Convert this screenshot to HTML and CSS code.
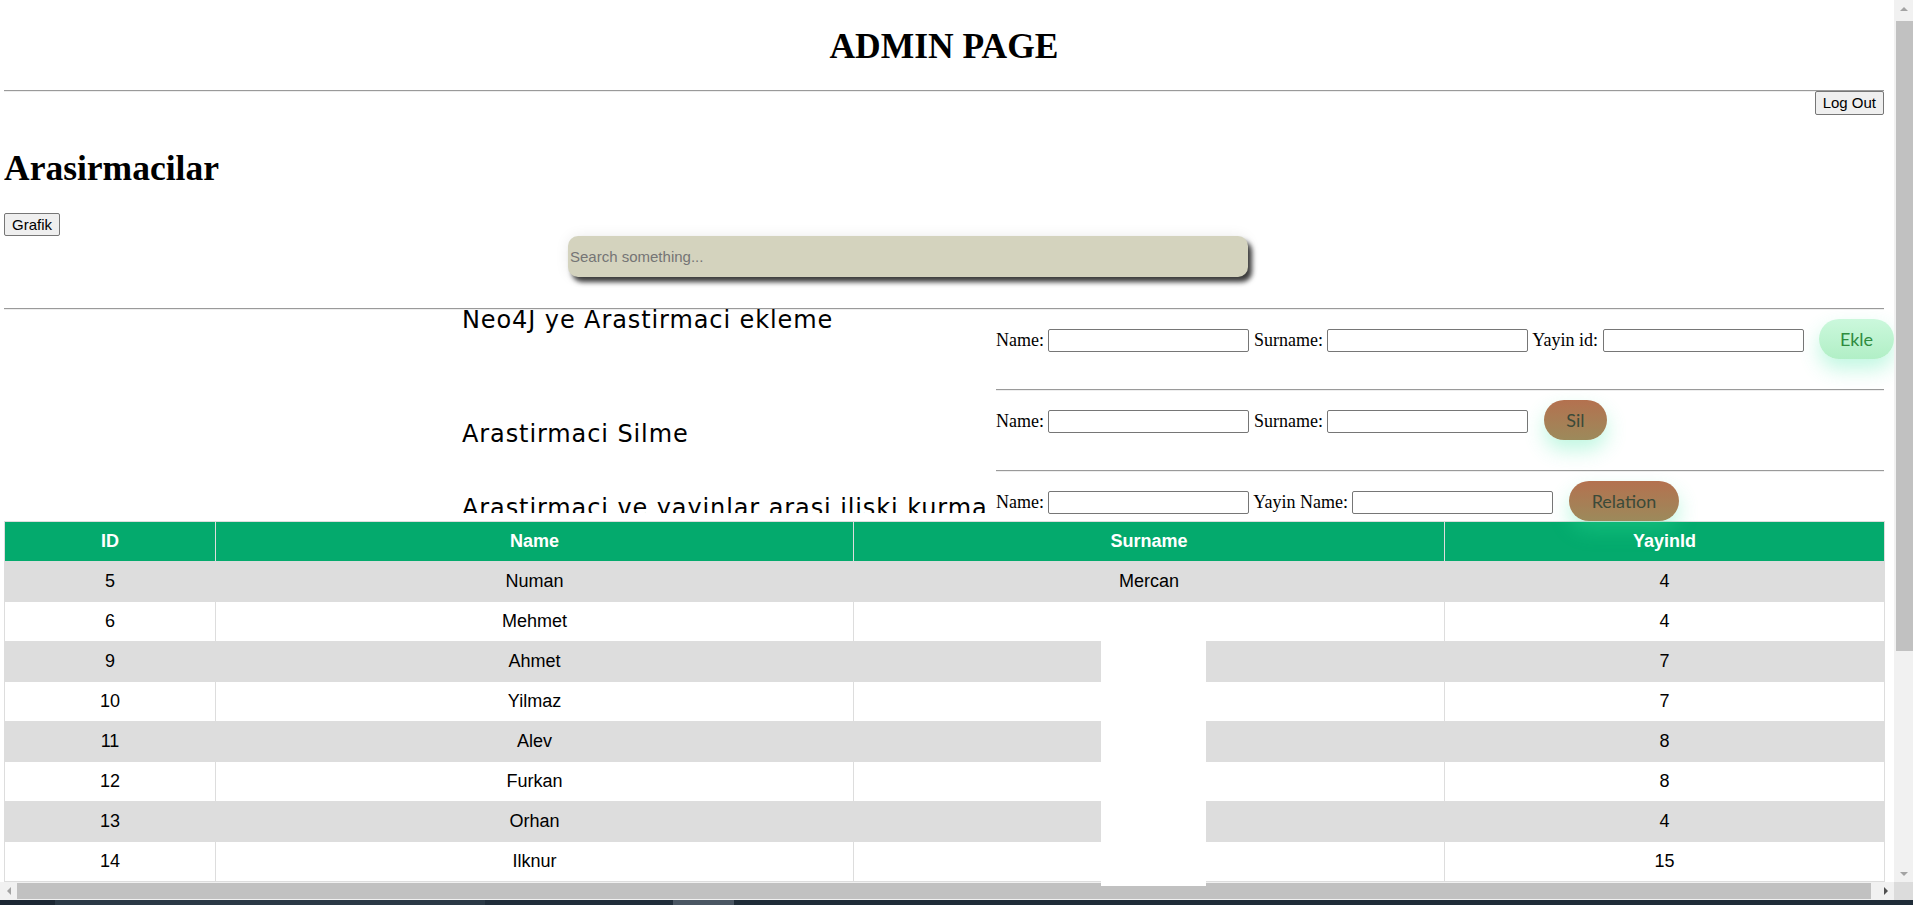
FILE: index.html
```html
<!DOCTYPE html>
<html lang="tr">
<head>
<meta charset="utf-8">
<title>Admin Page</title>
<link rel="stylesheet" href="styles.css">
</head>
<body>
<div class="window">
  <div class="main">
    <div class="viewport">
      <div class="page">
        <h1 class="page-title">ADMIN PAGE</h1>
        <hr class="rule rule-top">
        <div class="toolbar"><button class="sys-btn">Log Out</button></div>
        <h2 class="section-title">Arasirmacilar</h2>
        <div class="grafik-row"><button class="sys-btn">Grafik</button></div>
        <input class="search" type="text" placeholder="Search something...">
        <hr class="rule rule-mid">
        <div class="panel">
          <div class="panel-left">
            <h3 class="topic">Neo4J ye Arastirmaci ekleme</h3>
            <h3 class="topic topic-del">Arastirmaci Silme</h3>
            <h3 class="topic topic-rel">Arastirmaci ve yayinlar arasi iliski kurma</h3>
          </div>
          <div class="panel-right">
            <form class="form-row">Name: <input class="field" type="text"> Surname: <input class="field" type="text"> Yayin id: <input class="field" type="text"> <button type="button" class="act act-add">Ekle</button></form>
            <hr class="rule form-sep">
            <form class="form-row">Name: <input class="field" type="text"> Surname: <input class="field" type="text"> <button type="button" class="act act-del">Sil</button></form>
            <hr class="rule form-sep">
            <form class="form-row">Name: <input class="field" type="text"> Yayin Name: <input class="field" type="text"> <button type="button" class="act act-del act-rel">Relation</button></form>
          </div>
        </div>
        <table class="grid">
          <colgroup>
            <col class="c-id"><col class="c-name"><col class="c-surname"><col class="c-yayin">
          </colgroup>
          <thead>
            <tr><th>ID</th><th>Name</th><th>Surname</th><th>YayinId</th></tr>
          </thead>
          <tbody>
            <tr><td>5</td><td>Numan</td><td>Mercan</td><td>4</td></tr>
            <tr><td>6</td><td>Mehmet</td><td></td><td>4</td></tr>
            <tr><td>9</td><td>Ahmet</td><td></td><td>7</td></tr>
            <tr><td>10</td><td>Yilmaz</td><td></td><td>7</td></tr>
            <tr><td>11</td><td>Alev</td><td></td><td>8</td></tr>
            <tr><td>12</td><td>Furkan</td><td></td><td>8</td></tr>
            <tr><td>13</td><td>Orhan</td><td></td><td>4</td></tr>
            <tr><td>14</td><td>Ilknur</td><td></td><td>15</td></tr>
          </tbody>
        </table>
      </div>
    </div>
    <div class="vscroll">
      <div class="sb-btn"><span class="tri tri-up"></span></div>
      <div class="vs-track"><div class="vs-thumb"></div></div>
      <div class="sb-btn"><span class="tri tri-down"></span></div>
    </div>
  </div>
  <div class="hbar">
    <div class="hscroll">
      <div class="sb-btn sb-btn-h"><span class="tri tri-left"></span></div>
      <div class="hs-track"><div class="hs-thumb"></div></div>
      <div class="sb-btn sb-btn-h"><span class="tri tri-right"></span></div>
    </div>
    <div class="corner"></div>
  </div>
  <div class="taskbar">
    <span class="tb-seg tb-a"></span><span class="tb-seg tb-b"></span><span class="tb-seg tb-c"></span><span class="tb-seg tb-d"></span><span class="tb-seg tb-e"></span>
  </div>
  <div class="redact"></div>
</div>
</body>
</html>
```
FILE: styles.css
```css
* { box-sizing: border-box; }

html, body {
  margin: 0;
  padding: 0;
}

body {
  width: 1913px;
  height: 905px;
  overflow: hidden;
  background: #fff;
  color: #000;
  font-family: "Liberation Serif", "Times New Roman", serif;
  font-size: 18px;
}

.window {
  position: relative;
  display: flex;
  flex-direction: column;
  width: 1913px;
  height: 905px;
}

.main {
  display: flex;
  height: 882px;
}

.viewport {
  width: 1894px;
  height: 882px;
  overflow: hidden;
}

.page {
  width: 1884px;
  padding-left: 4px;
}

.page-title {
  margin: 26px 0 0;
  font-size: 35.5px;
  line-height: 40px;
  font-weight: bold;
  text-align: center;
}

.rule {
  display: block;
  height: 2px;
  margin: 0;
  border: 0;
  border-top: 1px solid #9a9a9a;
  border-bottom: 1px solid #eeeeee;
}

.rule-top { margin-top: 24px; }
.rule-mid { margin-top: 31px; }

.toolbar {
  display: flex;
  justify-content: flex-end;
  height: 23px;
  margin-top: -1px;
}

.sys-btn {
  height: 24px;
  padding: 0 7px;
  border: 1px solid #767676;
  border-radius: 2px;
  background: #efefef;
  color: #000;
  font-family: "Liberation Sans", Arial, sans-serif;
  font-size: 15px;
  line-height: 22px;
}

.section-title {
  margin: 34px 0 0;
  font-size: 35.5px;
  line-height: 40px;
  font-weight: bold;
}

.grafik-row {
  margin-top: 25px;
  height: 23px;
}

.grafik-row .sys-btn {
  display: block;
  height: 23px;
  line-height: 21px;
}

.search {
  display: block;
  width: 680px;
  height: 41px;
  margin-left: 564px;
  padding: 0 2px;
  border: 0;
  border-radius: 10px;
  background: #d4d3be;
  box-shadow: 4px 5px 5px #3c3c3c, 0 0 14px rgba(0, 0, 0, 0.08);
  font-family: "Liberation Sans", Arial, sans-serif;
  font-size: 15px;
  color: #333;
  outline: none;
}

.search::placeholder { color: #757575; }

.panel {
  display: flex;
}

.panel-left {
  width: 992px;
  height: 213px;
  margin-top: -10px;
  padding: 10px 0 0 458px;
  overflow: hidden;
  font-family: "Comic Sans MS", "DejaVu Sans", sans-serif;
}

.topic {
  margin: 0;
  font-size: 24px;
  font-weight: normal;
  line-height: 20px;
  letter-spacing: 0.9px;
  white-space: nowrap;
}

.topic-del { margin-top: 94px; }
.topic-rel { margin-top: 54px; }

.panel-right {
  width: 888px;
  padding-top: 9px;
  white-space: nowrap;
}

.form-row {
  display: block;
  height: 40px;
  margin: 0;
  font-size: 18px;
}

.form-sep {
  margin: 30px 0 9px;
}

.field {
  width: 201px;
  height: 23px;
  padding: 1px 2px;
  border: 1px solid #767676;
  border-radius: 2px;
  background: #fff;
  font-family: "Liberation Sans", Arial, sans-serif;
  font-size: 15px;
  vertical-align: baseline;
}

.act {
  display: inline-block;
  height: 40px;
  margin-left: 11px;
  padding: 0;
  border: 0;
  border-radius: 20px;
  font-family: Lato, "Open Sans", sans-serif;
  font-size: 18px;
  line-height: 40px;
  text-align: center;
  vertical-align: baseline;
  box-shadow: 0 10px 20px rgba(46, 229, 157, 0.3);
}

.act-add {
  width: 75px;
  background: linear-gradient(#cbf8dc, #b1efc6);
  color: #2f8c3f;
}

.act-del {
  width: 63px;
  background: linear-gradient(#b4714f, #9c8a5b);
  color: #3b4a39;
}

.act-rel { width: 110px; }

.grid {
  width: 1880px;
  border-collapse: collapse;
  table-layout: fixed;
  font-family: "Liberation Sans", Arial, sans-serif;
  font-size: 18px;
}

.c-id { width: 211px; }
.c-name { width: 638px; }
.c-surname { width: 591px; }
.c-yayin { width: 440px; }

.grid tr { height: 40px; }

.grid th,
.grid td {
  padding: 0 9px;
  border: 1px solid #ddd;
  text-align: center;
  color: #000;
}

.grid th {
  background: #04aa6d;
  color: #fff;
  font-weight: bold;
}

.grid tbody tr:nth-child(odd) { background: #ddd; }

/* browser scrollbars */
.vscroll {
  display: flex;
  flex-direction: column;
  width: 19px;
  height: 882px;
  background: #f1f1f1;
}

.sb-btn {
  display: flex;
  align-items: center;
  justify-content: center;
  height: 17px;
  flex: none;
}

.sb-btn-h {
  width: 17px;
  height: 18px;
}

.tri {
  width: 0;
  height: 0;
  border: 4px solid transparent;
}

.tri-up { border-bottom-color: #a3a3a3; border-top-width: 0; }
.tri-down { border-top-color: #a3a3a3; border-bottom-width: 0; }
.tri-left { border-right-color: #a3a3a3; border-left-width: 0; }
.tri-right { border-left-color: #505050; border-right-width: 0; }

.vs-track {
  flex: 1;
  padding: 4px 0 0 2px;
}

.vs-thumb {
  height: 630px;
  background: #c1c1c1;
}

.hbar {
  display: flex;
  height: 18px;
}

.hscroll {
  display: flex;
  width: 1894px;
  background: #f1f1f1;
}

.hs-track {
  flex: 1;
  padding: 1px 6px 1px 0;
}

.hs-thumb {
  height: 16px;
  background: #c1c1c1;
}

.corner {
  width: 19px;
  background: #dcdcdc;
}

.taskbar {
  display: flex;
  height: 5px;
  background: #1f2c38;
}

.tb-seg { display: block; height: 5px; }
.tb-a { width: 55px; background: #1c2733; }
.tb-b { width: 430px; background: #2b3946; }
.tb-c { width: 188px; background: #202d3a; }
.tb-d { width: 61px; background: #4a5663; }
.tb-e { flex: 1; background: #1f2c38; }

/* white block covering part of the table in the original capture */
.redact {
  position: absolute;
  left: 1101px;
  top: 641px;
  width: 105px;
  height: 245px;
  background: #fff;
}
```
